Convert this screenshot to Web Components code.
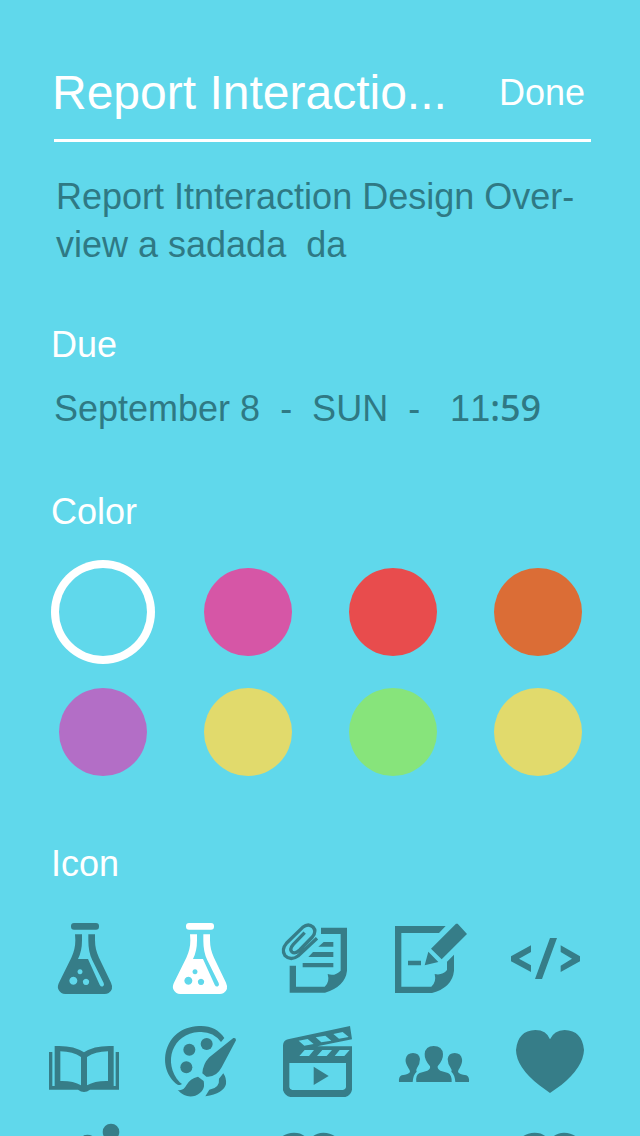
<!DOCTYPE html>
<html lang="en">
<head>
<meta charset="utf-8">
<meta name="viewport" content="width=device-width, initial-scale=1">
<title>Report Interaction Design</title>
<style>
  body { margin: 0; background: #60d8eb; font-family: "Liberation Sans", Arial, sans-serif; }
</style>
</head>
<body>
<task-editor>
  <task-header slot="header">Report Interactio...</task-header>
  <task-text slot="header">Report Itnteraction Design Over-<br>view a sadada  da</task-text>
  <task-section heading="Due"><due-date></due-date></task-section>
  <task-section heading="Color"><color-picker></color-picker></task-section>
  <task-section heading="Icon"><icon-picker></icon-picker></task-section>
</task-editor>

<script>
const ICONS = [
  // Each drawing keeps three units to the pixel; x and y give the origin of its 216-unit box.
  { name: 'Flask', x: 27, y: 36, art: 'flask' },
  { name: 'White flask', x: 27, y: 36, art: 'flask', checked: true },
  { name: 'Attachment', x: 27, y: 36, art: 'clip' },
  { name: 'Write', x: 372, y: 36, art: 'write' },
  { name: 'Code', x: 27, y: 36, art: 'code' },
  { name: 'Book', x: 27, y: 33, art: 'book' },
  { name: 'Palette', x: 372, y: 33, art: 'palette' },
  { name: 'Movie', x: 27, y: 33, art: 'movie' },
  { name: 'People', x: 372, y: 33, art: 'people' },
  { name: 'Heart', x: 27, y: 33, art: 'heart' },
  { name: 'Sport', x: 27, y: 345, art: 'sport', column: 1 },
  { name: 'Heart outline', x: 61, y: 37, art: 'heart', column: 3 },
  { name: 'Love', x: 29, y: 37, art: 'heart', column: 5 }
];

const ART = {
  flask: `<rect x="93" y="39" width="84" height="20" rx="9"/>
    <path fill-rule="evenodd" d="M105 73H126V91Q126 124 114 147H144L179 224Q183 232 189 229Q194 226 191 219L157 151Q145 126 145 92V73H165V91Q165 119 177 143L213 218Q222 238 206 249Q201 252 194 252H76Q61 252 55 238Q51 229 58 216L94 143Q106 119 106 91ZM120 178a7.500 7.500 0 1 0 .1 0ZM100 200a12 12 0 1 0 .1 0ZM138 206a9.500 9.500 0 1 0 .1 0Z"/>`,
  clip: `<path d="M153 53H231V182Q226 229 165 248H59V167H78V230H164Q180 217 173 192Q194 200 212 182V72H153Z"/>
    <path d="M161 96H190V110H145ZM129 126H190V141H115ZM98 159H190V172H98Z"/>
    <path fill="none" stroke="currentColor" stroke-width="10" stroke-linejoin="round" d="M104 68L70 103Q57 118 66 126Q75 133 89 120L127 81Q141 64 129 51Q115 38 98 52L50 99Q33 119 45 137Q62 154 84 138L141 85"/>`,
  write: `<path d="M375 48H527L507 69H394V230H484Q500 216 494 192Q517 197 531 180V155L552 134V182Q547 232 486 249H375ZM414 152H453V166H414ZM558 41H563L591 72L515 148L483 116ZM475 125L505 156L464 166Z"/>`,
  code: `<path d="M93 106V126L57 146L93 166V186L33 154V139ZM150 84H171L126 207H105ZM182 106L240 139V154L182 186V167L216 146L182 126Z"/>`,
  book: `<path fill-rule="evenodd" d="M27 111H37V213H44V93Q100 90 132 112Q164 90 221 93V213H227V111H237V224H150Q132 238 114 224H27ZM61 109V198Q100 197 123 211V126Q99 110 61 109ZM204 109Q165 110 141 126V211Q165 197 204 198Z"/>`,
  palette: `<path d="M413 209C347 163 368 37 477 33C510 31 537 44 553 69L543 81Q519 48 477 51C397 55 367 143 419 202L426 207Q420 212 413 209Z"/>
    <circle cx="448" cy="104" r="18"/><circle cx="500" cy="87" r="18"/><circle cx="439" cy="157" r="18"/>
    <path d="M580 69Q588 67 588 76L545 157Q529 188 499 185L487 175Q489 146 508 127ZM474 185L491 198Q498 229 466 242Q437 251 413 225Q430 229 439 211Q450 190 474 185ZM550 175Q560 190 558 207Q552 235 496 244L508 224Q540 219 537 191Z"/>`,
  movie: `<path fill-rule="evenodd" d="M39 91Q40 76 54 73L240 33L246 73L142 94H246V224Q243 241 226 246H61Q45 243 39 226ZM86 77L103 92L131 87L113 72ZM137 67L154 82L184 77L166 62ZM190 57L207 71L236 66L218 51ZM104 105L88 123H117L132 105ZM157 105L141 123H170L186 105ZM209 105L194 123H223L239 105ZM58 144V217Q59 223 67 225H219Q227 224 228 217V144Z"/>
    <path d="M131 155L176 183L131 210Z"/>`,
  people: `<path d="M439 201Q436 180 449 174L472 167Q482 163 480 154Q463 134 464 117Q466 93 491 93Q517 93 519 117Q520 134 503 154Q502 163 511 167L534 174Q546 180 545 201Z"/>
    <path d="M387 201Q385 186 395 181Q417 178 420 171Q420 165 415 159Q405 143 407 132Q410 114 429 114Q448 114 450 132Q450 146 441 159Q437 165 440 170Q430 178 428 201Z"/>
    <path d="M597 201Q599 186 589 181Q567 178 564 171Q564 165 569 159Q578 143 576 132Q573 114 554 114Q535 114 533 132Q533 146 542 159Q547 165 544 170Q554 178 556 201Z"/>`,
  heart: `<path d="M150 73Q139 45 106 45Q53 47 48 105Q49 157 118 211L150 234L184 210Q250 156 252 105Q247 47 194 45Q162 46 150 73Z"/>`,
  sport: `<circle cx="213" cy="351" r="25"/><path d="M131 361Q146 356 159 364L190 390L150 450L100 520H70L120 430Z"/>`
};

const define = (name, html, setup) => {
  const template = document.createElement('template');
  template.innerHTML = html;
  customElements.define(name, class extends HTMLElement {
    connectedCallback() {
      if (this.shadowRoot) return;
      this.attachShadow({ mode: 'open' }).append(template.content.cloneNode(true));
      if (setup) setup(this, this.shadowRoot);
    }
  });
};

define('task-editor', `
  <style>
    :host { display: block; height: 100vh; overflow: hidden auto; scrollbar-width: none; box-sizing: border-box;
      padding: 65px 49px 0 51px; color: #fff; font-size: 36px; line-height: 48px; }
    main { display: flex; flex-direction: column; gap: 52px; }
  </style>
  <main><div><slot name="header"></slot></div><slot></slot></main>`);

define('task-header', `
  <style>
    :host { display: block; }
    header { display: flex; align-items: center; justify-content: space-between; padding: 0 6px 0 1px; }
    h1 { margin: 0; font-size: 48px; line-height: 56px; font-weight: 400; white-space: nowrap; }
    button { border: 0; padding: 0; background: none; color: inherit; font: inherit; cursor: pointer; }
    hr { margin: 18px 0 0 3px; border: 0; height: 3px; background: #fff; }
  </style>
  <header><h1><slot></slot></h1><button type="button">Done</button></header><hr>`);

define('task-text', `
  <style>
    :host { display: block; padding-left: 5px; margin-top: 31px; color: #2f7984; }
    p { margin: 0; white-space: pre-wrap; }
  </style>
  <p><slot></slot></p>`);

define('task-section', `
  <style>
    :host { display: block; }
    h2 { margin: 0; font: inherit; }
  </style>
  <section><h2></h2><slot></slot></section>`,
  (host, root) => { root.querySelector('h2').textContent = host.getAttribute('heading'); });

define('due-date', `
  <style>
    :host { display: block; margin: 15px 0 0 3px; padding-bottom: 4px; color: #2f7984; }
    time { display: block; height: 48px; white-space: pre; font-kerning: none; }
    span { font-family: "Noto Sans", sans-serif; font-weight: 500; }
  </style>
  <time datetime="09-08T11:59">September 8  -  SUN  -   11<span>:59</span></time>`);

define('color-picker', `
  <style>
    :host { display: block; margin: 24px 1px 0 0; padding-bottom: 4px; }
    div { display: grid; grid-template-columns: repeat(4, 104px); justify-content: space-between; row-gap: 16px; }
    input { appearance: none; box-sizing: border-box; width: 88px; height: 88px; margin: 8px; border-radius: 50%;
      background: var(--swatch); cursor: pointer; }
    input:checked { box-shadow: 0 0 0 8px #fff; }
  </style>
  <div role="radiogroup" aria-label="Color"></div>`,
  (host, root) => {
    const colors = [['Sky', '#60d8eb'], ['Pink', '#d656a6'], ['Red', '#e84c4d'], ['Orange', '#db6d36'],
      ['Purple', '#b36ec6'], ['Yellow', '#e1da6c'], ['Green', '#87e47b'], ['Lemon', '#e1da6c']];
    root.querySelector('div').innerHTML = colors.map(([name, value], i) =>
      `<input type="radio" name="color" aria-label="${name}" style="--swatch:${value}"${i ? '' : ' checked'}>`).join('');
  });

define('icon-picker', `
  <style>
    :host { display: block; margin: 34px 10px 0 -2px; padding-bottom: 32px; }
    div { display: grid; grid-template-columns: repeat(5, 72px); justify-content: space-between; row-gap: 32px; }
    label { display: grid; color: #367d88; cursor: pointer; }
    label:has(:checked) { color: #fff; }
    input, svg { grid-area: 1 / 1; width: 72px; height: 72px; margin: 0; }
    input { appearance: none; cursor: pointer; }
    svg { display: block; overflow: visible; fill: currentColor; pointer-events: none; }
  </style>
  <div role="radiogroup" aria-label="Icon"></div>`,
  (host, root) => {
    root.querySelector('div').innerHTML = ICONS.map(icon => `
      <label${icon.column ? ` style="grid-column:${icon.column}"` : ''}>
        <input type="radio" name="icon" aria-label="${icon.name}"${icon.checked ? ' checked' : ''}>
        <svg viewBox="${icon.x} ${icon.y} 216 216" aria-hidden="true">${ART[icon.art]}</svg>
      </label>`).join('');
  });
</script>
</body>
</html>
